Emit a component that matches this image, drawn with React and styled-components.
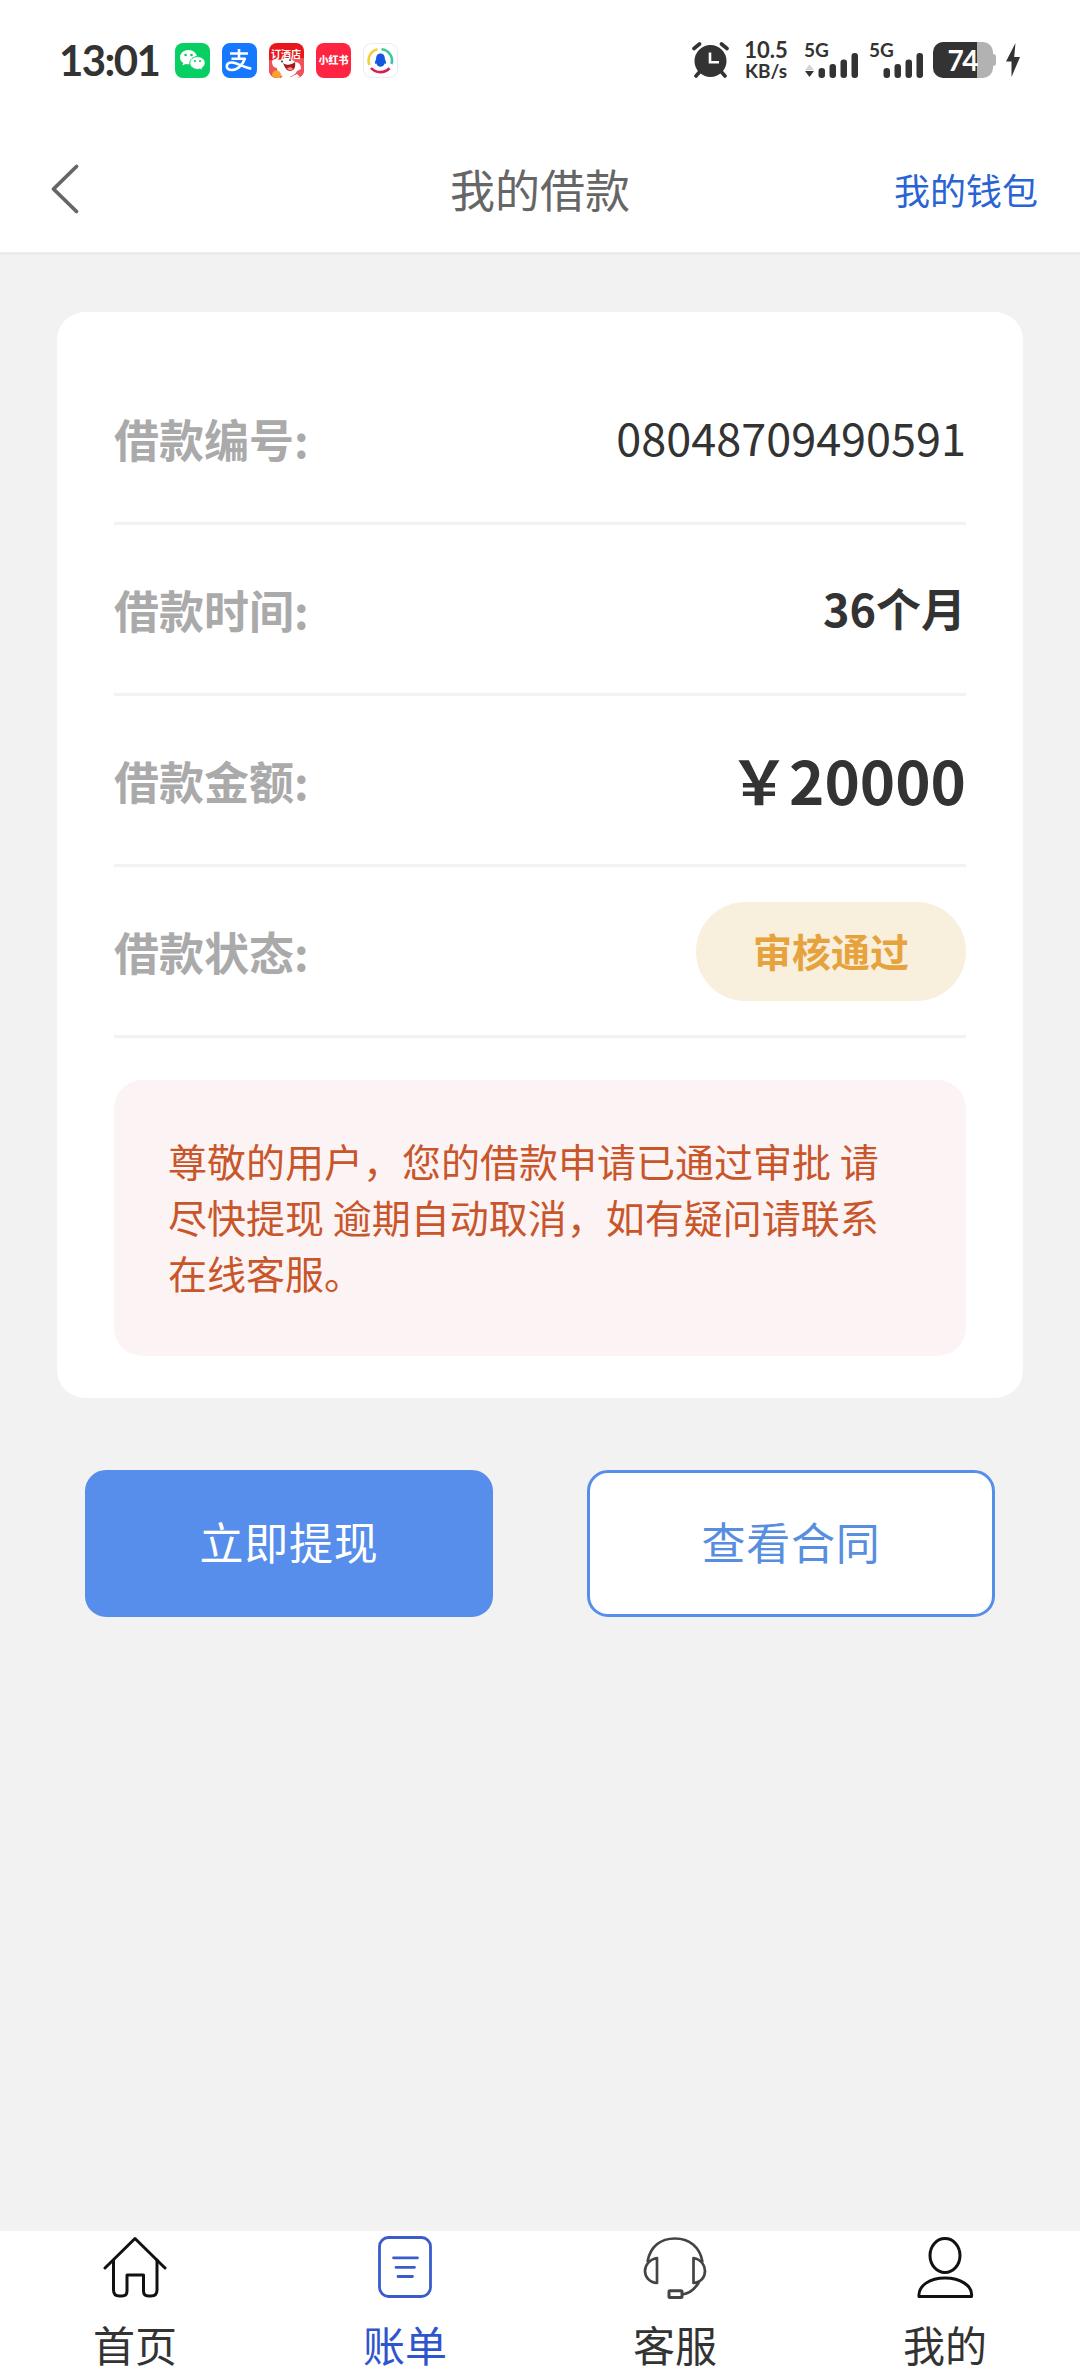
import React from 'react';
import styled, { createGlobalStyle, css } from 'styled-components';

const GlobalStyle = createGlobalStyle`
  * {
    box-sizing: border-box;
  }

  body {
    margin: 0;
    background-color: #f2f2f2;
    font-family: 'Noto Sans CJK SC', sans-serif;
    color: #333;
  }

  svg {
    display: block;
    flex: none;
  }
`;

const StyledPage = styled.div`
  display: flex;
  flex-direction: column;
  width: 1080px;
  height: 2376px;
  overflow: hidden;
`;

const StyledStatusBar = styled.div`
  display: flex;
  align-items: center;
  justify-content: space-between;
  height: 120px;
  padding: 0 60px 0 59px;
  background-color: #fff;
  font-family: Lato, sans-serif;
  font-weight: 700;
`;

const StyledStatusGroup = styled.div`
  display: flex;
  align-items: center;
`;

const StyledClock = styled.span`
  width: 116px;
  font-size: 42px;
  line-height: 42px;
  letter-spacing: -1.6px;
  white-space: nowrap;
`;

const StyledApps = styled.div`
  display: flex;
  gap: 12px;
`;

const StyledSpeed = styled.div`
  display: flex;
  flex-direction: column;
  align-items: center;
  width: 46px;
  margin: -1px 0 0 14px;
  white-space: nowrap;
`;

const StyledSpeedLine = styled.span`
  font-size: ${({ size }) => size}px;
  line-height: ${({ size }) => size}px;
`;

const StyledSignal = styled.div`
  display: flex;
  flex-direction: column;
  width: 55px;
  height: 36px;
  margin-left: ${({ gap }) => gap}px;
`;

const StyledNetwork = styled.span`
  height: 11px;
  font-size: 19px;
  line-height: 15px;
`;

const StyledBattery = styled.div`
  display: flex;
  align-items: center;
  margin-left: 9px;
`;

const StyledBatteryBody = styled.div`
  width: 60px;
  height: 36px;
  padding-right: 16px;
  border-radius: 10px;
  background: linear-gradient(to right, #333 44px, #b2b2b2 44px);
  color: #fff;
  font-size: 28px;
  line-height: 37px;
  letter-spacing: -1.5px;
  text-align: right;
`;

const StyledBatteryTip = styled.div`
  width: 3px;
  height: 12px;
  border-radius: 0 3px 3px 0;
  background-color: #b2b2b2;
`;

const StyledHeader = styled.header`
  display: grid;
  grid-template-columns: 1fr auto 1fr;
  align-items: center;
  height: 135px;
  padding: 6px 42px 0 50px;
  border-bottom: 3px solid #ebebeb;
  background-color: #fff;
`;

const StyledTitle = styled.h1`
  margin: 0 8px 0 0;
  color: #666;
  font-size: 45px;
  font-weight: 400;
  line-height: 60px;
`;

const StyledWalletLink = styled.a`
  justify-self: end;
  color: #2a63d4;
  font-size: 36px;
  line-height: 60px;
`;

const StyledMain = styled.main`
  flex: 1;
  padding: 57px 57px 0;
`;

const StyledCard = styled.section`
  height: 1086px;
  padding: 42px 57px 0;
  border-radius: 28px;
  background-color: #fff;
`;

const StyledRow = styled.div`
  display: flex;
  align-items: center;
  justify-content: space-between;
  height: 171px;
  border-bottom: 3px solid #f2f2f2;
`;

const StyledLabel = styled.span`
  color: #aaa;
  font-size: 45px;
  font-weight: 700;
`;

const StyledValue = styled.span`
  padding-bottom: 3px;
  font-size: ${({ size = 45 }) => size}px;
  font-weight: ${({ strong }) => (strong ? 700 : 400)};
`;

const StyledBadge = styled.span`
  width: 270px;
  height: 99px;
  border-radius: 50px;
  background-color: #f8efdc;
  color: #e6a23c;
  font-size: 39px;
  font-weight: 700;
  line-height: 97px;
  text-align: center;
`;

const StyledNotice = styled.p`
  height: 276px;
  margin: 42px 0 0;
  padding: 52px 54px;
  border-radius: 28px;
  background-color: #fcf4f4;
  color: #c9562b;
  font-size: 39px;
  line-height: 56px;
`;

const StyledActions = styled.div`
  display: flex;
  justify-content: space-between;
  padding: 72px 28px 0;
`;

const StyledButton = styled.button`
  width: 408px;
  height: 147px;
  padding: 0 0 5px;
  border: 3px solid #578eeb;
  border-radius: 21px;
  font-family: inherit;
  font-size: 44px;
  letter-spacing: 0.8px;
  ${({ primary }) =>
    primary
      ? css`
          background-color: #578eeb;
          color: #fff;
        `
      : css`
          background-color: #fff;
          color: #578edf;
        `}
`;

const StyledTabBar = styled.nav`
  display: grid;
  grid-template-columns: repeat(4, 1fr);
  height: 145px;
  background-color: #fff;
`;

const StyledTab = styled.a`
  display: flex;
  flex-direction: column;
  align-items: center;
  padding-top: 4px;
  color: ${({ active }) => (active ? '#2f55cc' : '#333')};
  font-size: 42px;
  line-height: 60px;
`;

const StyledTabLabel = styled.span`
  margin-top: 15px;
`;

const WechatIcon = () => (
  <svg width="35" height="35" viewBox="0 0 35 35">
    <rect width="35" height="35" rx="8" fill="#07cf63" />
    <path d="M13.500 7C8.800 7 5 10.200 5 14.200c0 2.300 1.200 4.200 3.100 5.500L7.500 22.500l3-1.600c1 .3 2 .4 3 .4 4.700 0 8.500-3.200 8.500-7.100S18.200 7 13.500 7z" fill="#fff" />
    <path d="M22.500 13.600c-4.300 0-7.700 2.900-7.700 6.400s3.400 6.400 7.700 6.400c.9 0 1.800-.1 2.600-.4l2.600 1.400-.6-2.400c1.900-1.200 3.100-3 3.100-5 0-3.500-3.400-6.400-7.700-6.400z" fill="#fff" stroke="#07cf63" strokeWidth="1" />
    <circle cx="10.600" cy="12" r="1.300" fill="#07cf63" />
    <circle cx="16.500" cy="12" r="1.300" fill="#07cf63" />
    <circle cx="20" cy="18" r="1.100" fill="#07cf63" />
    <circle cx="25" cy="18" r="1.100" fill="#07cf63" />
  </svg>
);

const AlipayIcon = () => (
  <svg width="35" height="35" viewBox="0 0 35 35">
    <rect width="35" height="35" rx="8" fill="#1677ff" />
    <g fill="none" stroke="#fff" strokeWidth="2.600">
      <path d="M8 10.500h18M17 6v10M9.500 15.800h14" />
      <path d="M23 15c-2 6.500-7 12-13 12-4 0-5.500-2-5.200-4.200.3-2.400 2.700-3.600 5.500-3.300 5.400.6 10 4.200 19 6.300" />
    </g>
  </svg>
);

const HotelIcon = () => (
  <svg width="35" height="35" viewBox="0 0 35 35">
    <clipPath id="hotel">
      <rect width="35" height="35" rx="8" />
    </clipPath>
    <g clipPath="url(#hotel)">
      <rect width="35" height="35" fill="#e9171b" />
      <path d="M0 17l35-2v20H0z" fill="#f0525c" />
      <path d="M3 19c0-3 4-4 8-2 5-3 12-2 15 2 4 0 6 3 6 7l-4 2c-2 4-6 6-10 6-6 0-10-4-10-9-3 0-5-3-5-6z" fill="#fff" />
      <path d="M14 20c4 3 8 2 12-1 1 5-1 9-5 9-3 0-5-3-7-8z" fill="#a81820" />
      <path d="M18 25c3-1 5-1 6 1-1 2-5 2-6-1z" fill="#ff8b78" />
      <circle cx="13" cy="18.500" r="1" fill="#333" />
      <circle cx="21" cy="17" r="1" fill="#333" />
      <circle cx="7.500" cy="32" r="4.500" fill="#f7a52b" />
      <path d="M12 35c2-4 6-3 10-1l6-3 4 4z" fill="#fff" />
    </g>
    <text x="17" y="14.500" textAnchor="middle" fontFamily="Noto Sans CJK SC, sans-serif" fontSize="10" fontWeight="700" fill="#fff">
      订酒店
    </text>
  </svg>
);

const RednoteIcon = () => (
  <svg width="35" height="35" viewBox="0 0 35 35">
    <rect width="35" height="35" rx="8" fill="#ff2442" />
    <text x="17.500" y="21.300" textAnchor="middle" fontFamily="Noto Sans CJK SC, sans-serif" fontSize="10" fontWeight="900" fill="#fff">
      小红书
    </text>
  </svg>
);

const MailIcon = () => (
  <svg width="35" height="35" viewBox="0 0 35 35">
    <rect x=".5" y=".5" width="34" height="34" rx="8" fill="#fff" stroke="#ececf0" />
    <g fill="none" strokeWidth="2.600">
      <path d="M6.500 22A11.500 11.500 0 0 1 14.500 6.300" stroke="#f2cf3f" />
      <path d="M18.500 6.200A11.500 11.500 0 0 1 28.500 21" stroke="#3cc8a0" />
      <path d="M8 25c5 5.500 14 5.500 18.500.2" stroke="#d81e50" />
    </g>
    <path d="M17.500 10.500c-3 0-4.300 2.200-4.300 5l-1.400 4.300c0 1.300.8 1.300 1.500.5.6 2.400 2 3.400 4.200 3.400s3.600-1 4.200-3.400c.7.800 1.500.8 1.500-.5l-1.400-4.300c0-2.800-1.300-5-4.300-5z" fill="#1456e0" />
  </svg>
);

const AlarmIcon = () => (
  <svg width="37" height="36" viewBox="0 0 37 36">
    <circle cx="18.500" cy="19" r="16" fill="#333" />
    <g fill="none" stroke="#333" strokeWidth="3.600" strokeLinecap="round">
      <path d="M2 6.500L7.500 2M35 6.500L29.500 2M7.500 30L4 34M29.500 30L33 34" />
    </g>
    <path d="M18 10.500v9.800h9" fill="none" stroke="#fff" strokeWidth="2.600" />
  </svg>
);

const SignalBars = ({ traffic }) => (
  <svg width="55" height="25" viewBox="0 0 55 25">
    {traffic && (
      <>
        <path d="M1 17l4.500-5.500L10 17z" fill="#d4d4d4" />
        <path d="M1 18l4.500 6L10 18z" fill="#333" />
      </>
    )}
    {[10, 14, 18.500, 25].map((height, index) => (
      <rect key={height} x={14.500 + index * 11} y={25 - height} width="6.500" height={height} rx="3" fill="#333" />
    ))}
  </svg>
);

const BoltIcon = () => (
  <svg width="14" height="34" viewBox="0 0 14 34">
    <path d="M9.500 0L0 18.500h5.500L5.500 34 14 14H8.200z" fill="#333" />
  </svg>
);

const StyledBolt = styled.div`
  margin-left: 10px;
`;

const BackIcon = () => (
  <svg width="30" height="52" viewBox="0 0 30 52">
    <path d="M26.500 3.500L3.500 26l23 22.500" fill="none" stroke="#666" strokeWidth="3.800" strokeLinecap="round" strokeLinejoin="round" />
  </svg>
);

const HomeIcon = () => (
  <svg width="64" height="64" viewBox="0 0 64 64" fill="none" stroke="#111" strokeWidth="3" strokeLinecap="round" strokeLinejoin="round">
    <path d="M2 33L32 3.500 62 33" />
    <path d="M10.500 25v30q0 6 6 6h2.500q5 0 5-5V40h16.500v16q0 5 5 5H48q6 0 6-6V25" />
  </svg>
);

const BillIcon = () => (
  <svg width="64" height="64" viewBox="0 0 64 64" fill="none" stroke="#3a5ccb" strokeWidth="2.800" strokeLinecap="round">
    <rect x="6.500" y="2.500" width="51" height="59" rx="9" />
    <path d="M20.500 22.800h24M23 32.300h18.500M25 41.500h14.500" />
  </svg>
);

const ServiceIcon = () => (
  <svg width="64" height="64" viewBox="0 0 64 64" fill="none" stroke="#444" strokeWidth="2.700" strokeLinejoin="round">
    <path d="M4.500 27C7 11 18 3.500 32 3.500s25 8 27.500 23.500" />
    <path d="M14 23v25C6 47.500 2 41.500 2 36S6 24.500 14 23z" />
    <path d="M50.500 23v25C58.500 47.500 62 41.500 62 36s-3.500-11.500-11.500-13z" />
    <path d="M56 47c-4 7-9 11.500-17 12.500" />
    <rect x="26" y="55.700" width="13" height="6.800" rx="1" strokeWidth="3" />
  </svg>
);

const ProfileIcon = () => (
  <svg width="64" height="64" viewBox="0 0 64 64" fill="none" stroke="#111" strokeWidth="3" strokeLinejoin="round">
    <ellipse cx="32" cy="20.500" rx="15" ry="17" />
    <path d="M6 61.500c-1-11 11-18.500 26-18.500S60 50.500 58.500 61.500z" />
  </svg>
);

const apps = [WechatIcon, AlipayIcon, HotelIcon, RednoteIcon, MailIcon];

const tabs = [
  { label: '首页', Icon: HomeIcon },
  { label: '账单', Icon: BillIcon, active: true },
  { label: '客服', Icon: ServiceIcon },
  { label: '我的', Icon: ProfileIcon },
];

const StatusBar = () => (
  <StyledStatusBar>
    <StyledStatusGroup>
      <StyledClock>13:01</StyledClock>
      <StyledApps>
        {apps.map((Icon, index) => (
          <Icon key={index} />
        ))}
      </StyledApps>
    </StyledStatusGroup>
    <StyledStatusGroup>
      <AlarmIcon />
      <StyledSpeed>
        <StyledSpeedLine size={22}>10.5</StyledSpeedLine>
        <StyledSpeedLine size={19}>KB/s</StyledSpeedLine>
      </StyledSpeed>
      <StyledSignal gap={15}>
        <StyledNetwork>5G</StyledNetwork>
        <SignalBars traffic />
      </StyledSignal>
      <StyledSignal gap={10}>
        <StyledNetwork>5G</StyledNetwork>
        <SignalBars />
      </StyledSignal>
      <StyledBattery>
        <StyledBatteryBody>74</StyledBatteryBody>
        <StyledBatteryTip />
      </StyledBattery>
      <StyledBolt>
        <BoltIcon />
      </StyledBolt>
    </StyledStatusGroup>
  </StyledStatusBar>
);

const LoanRow = ({ label, children }) => (
  <StyledRow>
    <StyledLabel>{label}:</StyledLabel>
    {children}
  </StyledRow>
);

const App = () => (
  <StyledPage>
    <GlobalStyle />
    <StatusBar />
    <StyledHeader>
      <BackIcon />
      <StyledTitle>我的借款</StyledTitle>
      <StyledWalletLink>我的钱包</StyledWalletLink>
    </StyledHeader>
    <StyledMain>
      <StyledCard>
        <LoanRow label="借款编号">
          <StyledValue>08048709490591</StyledValue>
        </LoanRow>
        <LoanRow label="借款时间">
          <StyledValue strong>36个月</StyledValue>
        </LoanRow>
        <LoanRow label="借款金额">
          <StyledValue strong size={60}>
            ￥20000
          </StyledValue>
        </LoanRow>
        <LoanRow label="借款状态">
          <StyledBadge>审核通过</StyledBadge>
        </LoanRow>
        <StyledNotice>尊敬的用户，您的借款申请已通过审批 请尽快提现 逾期自动取消，如有疑问请联系在线客服。</StyledNotice>
      </StyledCard>
      <StyledActions>
        <StyledButton primary>立即提现</StyledButton>
        <StyledButton>查看合同</StyledButton>
      </StyledActions>
    </StyledMain>
    <StyledTabBar>
      {tabs.map(({ label, Icon, active }) => (
        <StyledTab key={label} active={active}>
          <Icon />
          <StyledTabLabel>{label}</StyledTabLabel>
        </StyledTab>
      ))}
    </StyledTabBar>
  </StyledPage>
);

export default App;
